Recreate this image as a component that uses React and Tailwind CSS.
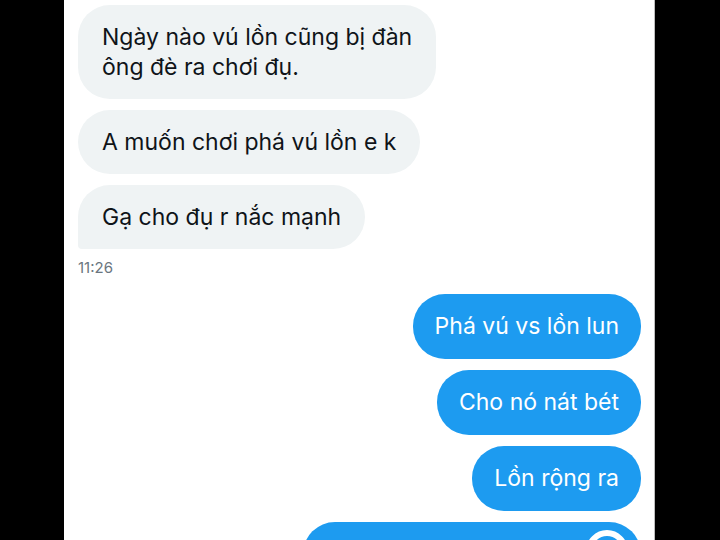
import React from 'react';

const received = [
    { lines: ['Ngày nào vú lồn cũng bị đàn', 'ông đè ra chơi đụ.'] },
    { lines: ['A muốn chơi phá vú lồn e k'] },
    { lines: ['Gạ cho đụ r nắc mạnh'], last: true },
];

const sent = ['Phá vú vs lồn lun', 'Cho nó nát bét', 'Lồn rộng ra'];

export default function App() {
    return (
        <div className="w-[720px] h-[540px] overflow-hidden bg-black flex" style={{ fontFamily: 'Inter, "Noto Sans", sans-serif' }}>
            <div className="ml-[64px] w-[591px] h-full bg-white border-r border-[#bdbdbd] flex flex-col pt-[5px] pl-[14px] pr-[13px]">
                {/* Incoming messages */}
                <div className="flex flex-col items-start gap-[11px]">
                    {received.map((m, i) => (
                        <div
                            key={i}
                            className={`bg-[#eff3f4] text-[#0f1419] text-[23px] leading-[30px] px-[24px] py-[17px] whitespace-nowrap ${m.last ? 'rounded-[32px] rounded-bl-[4px]' : 'rounded-[32px]'}`}
                        >
                            {m.lines.map((l, j) => (
                                <div key={j}>{l}</div>
                            ))}
                        </div>
                    ))}
                </div>
                <div className="mt-[9px] text-[15px] leading-[20px] text-[#6b7680]">11:26</div>

                {/* Outgoing messages */}
                <div className="mt-[16px] flex flex-col items-end gap-[11px]">
                    {sent.map((t, i) => (
                        <div key={i} className="bg-[#1d9bf0] text-white text-[23px] leading-[31px] px-[22px] py-[17px] rounded-[32px] whitespace-nowrap">
                            {t}
                        </div>
                    ))}
                    <div className="relative w-[338px] h-[65px] bg-[#1d9bf0] rounded-[32px]">
                        <div className="absolute left-[283px] top-[8px] w-[42px] h-[42px] rounded-full border-[6px] border-white" />
                    </div>
                </div>
            </div>
        </div>
    );
}
